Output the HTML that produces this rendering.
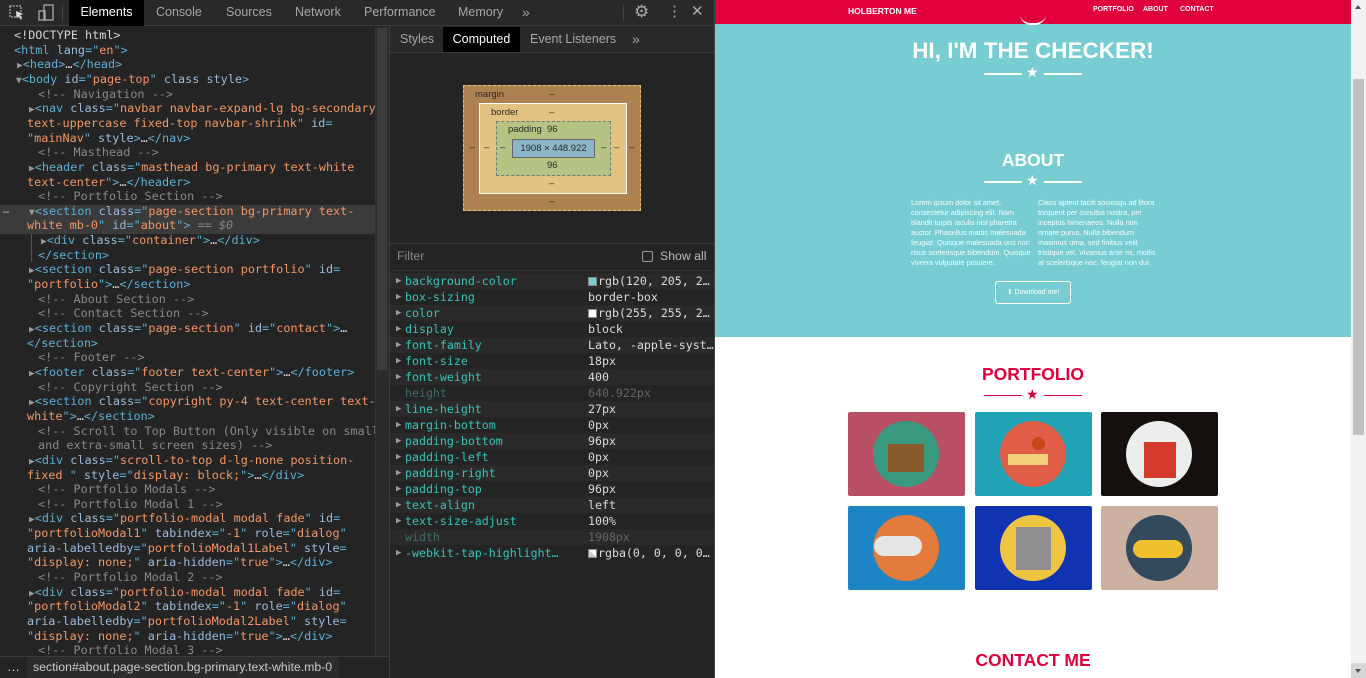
<!DOCTYPE html>
<html><head><meta charset="utf-8"><style>
*{margin:0;padding:0;box-sizing:border-box}
body{width:1366px;height:678px;overflow:hidden;background:#242424;position:relative;font-family:"Liberation Sans",sans-serif}
.abs{position:absolute}
.mono{font-family:"DejaVu Sans Mono","Liberation Mono",monospace}
#el{left:0;top:28px;width:375px;height:629px;overflow:hidden;font-size:11.8px;color:#d5d5d5}
#el .l{position:absolute;white-space:pre;height:14.65px;line-height:14.65px}
.t{color:#5db0d7}.a{color:#9bbbdc}.v{color:#f29766}.c{color:#898989}
.tri{color:#9a9a9a;font-size:9.5px}
.tab{position:absolute;top:0;height:26px;line-height:24px;font-size:12.5px;color:#a8a8a8}
.ctab{position:absolute;top:27px;height:25px;line-height:24px;font-size:12.5px;color:#a8a8a8}
.row{position:absolute;left:390px;width:324px;height:16px;line-height:16px;font-size:11.6px;white-space:pre}
.row .n{position:absolute;left:15px;color:#35c5bb}
.row .x{position:absolute;left:198px;color:#dcdcdc}
.row .ar{position:absolute;left:6px;color:#9a9a9a;font-size:9px}
.sw{display:inline-block;width:9px;height:9px;border:1px solid #888;vertical-align:-1px;margin-right:1px}
.card{position:absolute;width:117px;height:84px;border-radius:2px}
.circ{position:absolute;left:25px;top:9px;width:66px;height:66px;border-radius:50%}
.ptxt{position:absolute;font-size:7.3px;line-height:10px;color:#f4feff;width:122px}
</style></head><body>

<div class="abs" style="left:0;top:0;width:715px;height:26px;background:#292929;border-bottom:1px solid #3d3d3d"></div>
<svg class="abs" style="left:8px;top:4px" width="46" height="18" viewBox="0 0 46 18"><rect x="2" y="2" width="11" height="11" fill="none" stroke="#aaa" stroke-width="1.3" stroke-dasharray="2 1"/><path d="M8 7 L15 10 L12 11 L14 15 L12.5 15.5 L10.5 12 L8.5 14 Z" fill="#ddd"/><rect x="36" y="1" width="9" height="15" fill="none" stroke="#aaa" stroke-width="1.3"/><rect x="31" y="7" width="6" height="9" fill="none" stroke="#aaa" stroke-width="1.3"/></svg>
<div class="abs" style="left:62px;top:5px;width:1px;height:16px;background:#444"></div>
<div class="tab" style="left:69px;width:75px;background:#000;color:#fff;text-align:center">Elements</div>
<div class="tab" style="left:156px">Console</div>
<div class="tab" style="left:226px">Sources</div>
<div class="tab" style="left:295px">Network</div>
<div class="tab" style="left:364px">Performance</div>
<div class="tab" style="left:458px">Memory</div>
<div class="tab" style="left:522px;font-size:14px">»</div>
<div class="abs" style="left:623px;top:5px;width:1px;height:16px;background:#444"></div>
<div class="tab" style="left:634px;font-size:17px;color:#aaa">⚙</div>
<div class="tab" style="left:667px;font-size:15px;color:#aaa">⋮</div>
<div class="tab" style="left:691px;font-size:15px;color:#aaa">✕</div>

<div class="abs" style="left:0;top:205px;width:375px;height:29px;background:#3b3b3b"></div>
<div class="abs" style="left:31px;top:234px;width:1px;height:28px;background:#3a5a8a"></div>
<div class="abs mono" style="left:3px;top:205px;font-size:10px;color:#aaa">…</div>
<div id="el" class="abs mono">
<div class="l" style="top:0;left:14px">&lt;!DOCTYPE html&gt;</div>
<div class="l" style="top:14.65px;left:14px"><span class="t">&lt;html </span><span class="a">lang</span><span class="t">="</span><span class="v">en</span><span class="t">"&gt;</span></div>
<div class="l" style="top:29.3px;left:17px"><span class="tri">▶</span><span class="t">&lt;head&gt;</span>…<span class="t">&lt;/head&gt;</span></div>
<div class="l" style="top:43.95px;left:16px"><span class="tri">▼</span><span class="t">&lt;body </span><span class="a">id</span><span class="t">="</span><span class="v">page-top</span><span class="t">" </span><span class="a">class style</span><span class="t">&gt;</span></div>
<div class="l c" style="top:58.6px;left:38px">&lt;!-- Navigation --&gt;</div>
<div class="l" style="top:73.25px;left:29px"><span class="tri">▶</span><span class="t">&lt;nav </span><span class="a">class</span><span class="t">="</span><span class="v">navbar navbar-expand-lg bg-secondary</span></div>
<div class="l" style="top:87.9px;left:27px"><span class="v">text-uppercase fixed-top navbar-shrink</span><span class="t">" </span><span class="a">id</span><span class="t">=</span></div>
<div class="l" style="top:102.55px;left:27px"><span class="t">"</span><span class="v">mainNav</span><span class="t">" </span><span class="a">style</span><span class="t">&gt;</span>…<span class="t">&lt;/nav&gt;</span></div>
<div class="l c" style="top:117.2px;left:38px">&lt;!-- Masthead --&gt;</div>
<div class="l" style="top:131.85px;left:29px"><span class="tri">▶</span><span class="t">&lt;header </span><span class="a">class</span><span class="t">="</span><span class="v">masthead bg-primary text-white</span></div>
<div class="l" style="top:146.5px;left:27px"><span class="v">text-center</span><span class="t">"&gt;</span>…<span class="t">&lt;/header&gt;</span></div>
<div class="l c" style="top:161.15px;left:38px">&lt;!-- Portfolio Section --&gt;</div>
<div class="l" style="top:175.8px;left:29px"><span class="tri">▼</span><span class="t">&lt;section </span><span class="a">class</span><span class="t">="</span><span class="v">page-section bg-primary text-</span></div>
<div class="l" style="top:190.45px;left:27px"><span class="v">white mb-0</span><span class="t">" </span><span class="a">id</span><span class="t">="</span><span class="v">about</span><span class="t">"&gt;</span> <span class="c">== <i>$0</i></span></div>
<div class="l" style="top:205.1px;left:41px"><span class="tri">▶</span><span class="t">&lt;div </span><span class="a">class</span><span class="t">="</span><span class="v">container</span><span class="t">"&gt;</span>…<span class="t">&lt;/div&gt;</span></div>
<div class="l t" style="top:219.75px;left:38px">&lt;/section&gt;</div>
<div class="l" style="top:234.4px;left:29px"><span class="tri">▶</span><span class="t">&lt;section </span><span class="a">class</span><span class="t">="</span><span class="v">page-section portfolio</span><span class="t">" </span><span class="a">id</span><span class="t">=</span></div>
<div class="l" style="top:249.05px;left:27px"><span class="t">"</span><span class="v">portfolio</span><span class="t">"&gt;</span>…<span class="t">&lt;/section&gt;</span></div>
<div class="l c" style="top:263.7px;left:38px">&lt;!-- About Section --&gt;</div>
<div class="l c" style="top:278.35px;left:38px">&lt;!-- Contact Section --&gt;</div>
<div class="l" style="top:293px;left:29px"><span class="tri">▶</span><span class="t">&lt;section </span><span class="a">class</span><span class="t">="</span><span class="v">page-section</span><span class="t">" </span><span class="a">id</span><span class="t">="</span><span class="v">contact</span><span class="t">"&gt;</span>…</div>
<div class="l t" style="top:307.65px;left:27px">&lt;/section&gt;</div>
<div class="l c" style="top:322.3px;left:38px">&lt;!-- Footer --&gt;</div>
<div class="l" style="top:336.95px;left:29px"><span class="tri">▶</span><span class="t">&lt;footer </span><span class="a">class</span><span class="t">="</span><span class="v">footer text-center</span><span class="t">"&gt;</span>…<span class="t">&lt;/footer&gt;</span></div>
<div class="l c" style="top:351.6px;left:38px">&lt;!-- Copyright Section --&gt;</div>
<div class="l" style="top:366.25px;left:29px"><span class="tri">▶</span><span class="t">&lt;section </span><span class="a">class</span><span class="t">="</span><span class="v">copyright py-4 text-center text-</span></div>
<div class="l" style="top:380.9px;left:27px"><span class="v">white</span><span class="t">"&gt;</span>…<span class="t">&lt;/section&gt;</span></div>
<div class="l c" style="top:395.55px;left:38px">&lt;!-- Scroll to Top Button (Only visible on small</div>
<div class="l c" style="top:410.2px;left:38px">and extra-small screen sizes) --&gt;</div>
<div class="l" style="top:424.85px;left:29px"><span class="tri">▶</span><span class="t">&lt;div </span><span class="a">class</span><span class="t">="</span><span class="v">scroll-to-top d-lg-none position-</span></div>
<div class="l" style="top:439.5px;left:27px"><span class="v">fixed </span><span class="t">" </span><span class="a">style</span><span class="t">="</span><span class="v">display: block;</span><span class="t">"&gt;</span>…<span class="t">&lt;/div&gt;</span></div>
<div class="l c" style="top:454.15px;left:38px">&lt;!-- Portfolio Modals --&gt;</div>
<div class="l c" style="top:468.8px;left:38px">&lt;!-- Portfolio Modal 1 --&gt;</div>
<div class="l" style="top:483.45px;left:29px"><span class="tri">▶</span><span class="t">&lt;div </span><span class="a">class</span><span class="t">="</span><span class="v">portfolio-modal modal fade</span><span class="t">" </span><span class="a">id</span><span class="t">=</span></div>
<div class="l" style="top:498.1px;left:27px"><span class="t">"</span><span class="v">portfolioModal1</span><span class="t">" </span><span class="a">tabindex</span><span class="t">="</span><span class="v">-1</span><span class="t">" </span><span class="a">role</span><span class="t">="</span><span class="v">dialog</span><span class="t">"</span></div>
<div class="l" style="top:512.75px;left:27px"><span class="a">aria-labelledby</span><span class="t">="</span><span class="v">portfolioModal1Label</span><span class="t">" </span><span class="a">style</span><span class="t">=</span></div>
<div class="l" style="top:527.4px;left:27px"><span class="t">"</span><span class="v">display: none;</span><span class="t">" </span><span class="a">aria-hidden</span><span class="t">="</span><span class="v">true</span><span class="t">"&gt;</span>…<span class="t">&lt;/div&gt;</span></div>
<div class="l c" style="top:542.05px;left:38px">&lt;!-- Portfolio Modal 2 --&gt;</div>
<div class="l" style="top:556.7px;left:29px"><span class="tri">▶</span><span class="t">&lt;div </span><span class="a">class</span><span class="t">="</span><span class="v">portfolio-modal modal fade</span><span class="t">" </span><span class="a">id</span><span class="t">=</span></div>
<div class="l" style="top:571.35px;left:27px"><span class="t">"</span><span class="v">portfolioModal2</span><span class="t">" </span><span class="a">tabindex</span><span class="t">="</span><span class="v">-1</span><span class="t">" </span><span class="a">role</span><span class="t">="</span><span class="v">dialog</span><span class="t">"</span></div>
<div class="l" style="top:586px;left:27px"><span class="a">aria-labelledby</span><span class="t">="</span><span class="v">portfolioModal2Label</span><span class="t">" </span><span class="a">style</span><span class="t">=</span></div>
<div class="l" style="top:600.65px;left:27px"><span class="t">"</span><span class="v">display: none;</span><span class="t">" </span><span class="a">aria-hidden</span><span class="t">="</span><span class="v">true</span><span class="t">"&gt;</span>…<span class="t">&lt;/div&gt;</span></div>
<div class="l c" style="top:615.3px;left:38px">&lt;!-- Portfolio Modal 3 --&gt;</div>
</div>
<div class="abs" style="left:375px;top:27px;width:14px;height:630px;background:#2b2b2b;border-left:1px solid #333"></div>
<div class="abs" style="left:377px;top:28px;width:10px;height:342px;background:#3c3c3c"></div>
<div class="abs" style="left:0;top:656px;width:390px;height:22px;background:#242424;border-top:1px solid #3d3d3d"></div>
<div class="abs" style="left:27px;top:657px;width:311px;height:21px;background:#2c2c2c"></div>
<div class="abs" style="left:7px;top:659px;font-size:13px;color:#ddd">…</div>
<div class="abs" style="left:33px;top:660px;font-size:12.3px;color:#ccc;white-space:nowrap">section#about.page-section.bg-primary.text-white.mb-0</div>

<div class="abs" style="left:389px;top:26px;width:1px;height:652px;background:#3d3d3d"></div>

<div class="abs" style="left:390px;top:26px;width:325px;height:27px;background:#292929;border-bottom:1px solid #3d3d3d"></div>
<div class="ctab" style="left:400px">Styles</div>
<div class="ctab" style="left:443px;width:77px;background:#000;color:#fff;text-align:center">Computed</div>
<div class="ctab" style="left:530px">Event Listeners</div>
<div class="ctab" style="left:632px;font-size:14px">»</div>

<div class="abs" style="left:463px;top:85px;width:178px;height:126px;background:#ae8150;border:1px dashed #e0c080;font-size:9.5px;color:#2a2a2a">
 <div class="abs" style="left:11px;top:3px">margin</div><div class="abs" style="left:85px;top:3px">–</div>
 <div class="abs" style="left:85px;top:110px">–</div>
 <div class="abs" style="left:6px;top:56px">–</div><div class="abs" style="left:165px;top:56px">–</div>
 <div class="abs" style="left:15px;top:17px;width:148px;height:91px;background:#e2c382;border:1px solid #fff">
  <div class="abs" style="left:11px;top:3px">border</div><div class="abs" style="left:69px;top:3px">–</div>
  <div class="abs" style="left:69px;top:74px">–</div>
  <div class="abs" style="left:4px;top:38px">–</div><div class="abs" style="left:134px;top:38px">–</div>
  <div class="abs" style="left:16px;top:17px;width:115px;height:55px;background:#b5c383;border:1px dashed #777">
   <div class="abs" style="left:11px;top:2px">padding</div><div class="abs" style="left:50px;top:2px">96</div>
   <div class="abs" style="left:50px;top:38px">96</div>
   <div class="abs" style="left:3px;top:20px">–</div><div class="abs" style="left:104px;top:20px">–</div>
   <div class="abs" style="left:15px;top:17px;width:83px;height:19px;background:#8cb5c8;border:1px solid #666;text-align:center;line-height:17px">1908 × 448.922</div>
  </div>
 </div>
</div>

<div class="abs" style="left:390px;top:243px;width:325px;height:1px;background:#3d3d3d"></div>
<div class="abs" style="left:397px;top:249px;font-size:12.3px;color:#888">Filter</div>
<div class="abs" style="left:642px;top:251px;width:11px;height:11px;border:1px solid #999;border-radius:2px"></div>
<div class="abs" style="left:660px;top:249px;font-size:12.3px;color:#bbb">Show all</div>
<div class="abs" style="left:390px;top:270px;width:325px;height:1px;background:#333"></div>

<div class="mono">
<div class="row" style="top:273px;background:#2a2a2a"><span class="ar">▶</span><span class="n">background-color</span><span class="x"><span class="sw" style="background:#78cdd2"></span>rgb(120, 205, 2…</span></div>
<div class="row" style="top:289px"><span class="ar">▶</span><span class="n">box-sizing</span><span class="x">border-box</span></div>
<div class="row" style="top:305px;background:#2a2a2a"><span class="ar">▶</span><span class="n">color</span><span class="x"><span class="sw" style="background:#fff"></span>rgb(255, 255, 2…</span></div>
<div class="row" style="top:321px"><span class="ar">▶</span><span class="n">display</span><span class="x">block</span></div>
<div class="row" style="top:337px;background:#2a2a2a"><span class="ar">▶</span><span class="n">font-family</span><span class="x">Lato, -apple-syst…</span></div>
<div class="row" style="top:353px"><span class="ar">▶</span><span class="n">font-size</span><span class="x">18px</span></div>
<div class="row" style="top:369px;background:#2a2a2a"><span class="ar">▶</span><span class="n">font-weight</span><span class="x">400</span></div>
<div class="row" style="top:385px"><span class="n" style="color:#3d6e6a">height</span><span class="x" style="color:#666">640.922px</span></div>
<div class="row" style="top:401px;background:#2a2a2a"><span class="ar">▶</span><span class="n">line-height</span><span class="x">27px</span></div>
<div class="row" style="top:417px"><span class="ar">▶</span><span class="n">margin-bottom</span><span class="x">0px</span></div>
<div class="row" style="top:433px;background:#2a2a2a"><span class="ar">▶</span><span class="n">padding-bottom</span><span class="x">96px</span></div>
<div class="row" style="top:449px"><span class="ar">▶</span><span class="n">padding-left</span><span class="x">0px</span></div>
<div class="row" style="top:465px;background:#2a2a2a"><span class="ar">▶</span><span class="n">padding-right</span><span class="x">0px</span></div>
<div class="row" style="top:481px"><span class="ar">▶</span><span class="n">padding-top</span><span class="x">96px</span></div>
<div class="row" style="top:497px;background:#2a2a2a"><span class="ar">▶</span><span class="n">text-align</span><span class="x">left</span></div>
<div class="row" style="top:513px"><span class="ar">▶</span><span class="n">text-size-adjust</span><span class="x">100%</span></div>
<div class="row" style="top:529px;background:#2a2a2a"><span class="n" style="color:#3d6e6a">width</span><span class="x" style="color:#666">1908px</span></div>
<div class="row" style="top:545px"><span class="ar">▶</span><span class="n">-webkit-tap-highlight…</span><span class="x"><span class="sw" style="background:linear-gradient(45deg,#ccc 50%,#fff 50%)"></span>rgba(0, 0, 0, 0…</span></div>
</div>
<div class="abs" style="left:714px;top:0;width:1px;height:678px;background:#444"></div>

<div class="abs" style="left:715px;top:0;width:636px;height:678px;background:#fff;overflow:hidden">
 <div class="abs" style="left:0;top:24px;width:636px;height:313px;background:#78cdd2"></div>
 <div class="abs" style="left:0;top:0;width:636px;height:24px;background:#e0003b"></div>
 <div class="abs" style="left:305px;top:14px;width:26px;height:11px;border-radius:0 0 13px 13px;border-bottom:2px solid #fff"></div>
 <div class="abs" style="left:133px;top:6px;font-size:8.5px;font-weight:bold;color:#fff">HOLBERTON ME</div>
 <div class="abs" style="left:378px;top:6px;font-size:7px;font-weight:bold;color:#fff">PORTFOLIO</div>
 <div class="abs" style="left:428px;top:6px;font-size:7px;font-weight:bold;color:#fff">ABOUT</div>
 <div class="abs" style="left:465px;top:6px;font-size:7px;font-weight:bold;color:#fff">CONTACT</div>
 <div class="abs" style="left:0;top:38px;width:636px;text-align:center;font-size:22.5px;font-weight:bold;color:#fff">HI, I'M THE CHECKER!</div>
 <div class="abs" style="left:269px;top:73px;width:38px;height:2px;background:#fff"></div>
 <div class="abs" style="left:329px;top:73px;width:38px;height:2px;background:#fff"></div>
 <div class="abs" style="left:311px;top:64px;font-size:14px;color:#fff">★</div>
 <div class="abs" style="left:0;top:150px;width:636px;text-align:center;font-size:17.5px;font-weight:bold;color:#fff">ABOUT</div>
 <div class="abs" style="left:269px;top:181px;width:38px;height:2px;background:#fff"></div>
 <div class="abs" style="left:329px;top:181px;width:38px;height:2px;background:#fff"></div>
 <div class="abs" style="left:311px;top:172px;font-size:14px;color:#fff">★</div>
 <div class="ptxt" style="left:196px;top:198px">Lorem ipsum dolor sit amet, consectetur adipiscing elit. Nam blandit turpis iaculis nisl pharetra auctor. Phasellus mattis malesuada feugiat. Quisque malesuada orci non risus scelerisque bibendum. Quisque viverra vulputate posuere.</div>
 <div class="ptxt" style="left:323px;top:198px">Class aptent taciti sociosqu ad litora torquent per conubia nostra, per inceptos himenaeos. Nulla non ornare purus. Nulla bibendum maximus urna, sed finibus velit tristique vel. Vivamus ante mi, mollis at scelerisque nec, feugiat non dui.</div>
 <div class="abs" style="left:280px;top:281px;width:76px;height:23px;border:1px solid #fff;border-radius:3px;font-size:7px;color:#fff;line-height:21px;text-align:center">⬇ Download me!</div>
 <div class="abs" style="left:0;top:364px;width:636px;text-align:center;font-size:17.5px;font-weight:bold;color:#e0003b">PORTFOLIO</div>
 <div class="abs" style="left:269px;top:395px;width:38px;height:1px;background:#e0003b"></div>
 <div class="abs" style="left:329px;top:395px;width:38px;height:1px;background:#e0003b"></div>
 <div class="abs" style="left:311px;top:386px;font-size:14px;color:#e0003b">★</div>
 <div class="card" style="left:133px;top:412px;background:#b94f64"><div class="circ" style="background:#3a9a80"></div><div class="abs" style="left:40px;top:32px;width:36px;height:28px;background:#8a5a2a"></div></div>
 <div class="card" style="left:260px;top:412px;background:#21a3b5"><div class="circ" style="background:#e05d48"></div><div class="abs" style="left:33px;top:42px;width:40px;height:11px;background:#f2d078"></div><div class="abs" style="left:57px;top:25px;width:13px;height:13px;border-radius:50%;background:#c8451c"></div></div>
 <div class="card" style="left:386px;top:412px;background:#15100e"><div class="circ" style="background:#eceeee"></div><div class="abs" style="left:43px;top:30px;width:32px;height:36px;background:#d33a2c"></div></div>
 <div class="card" style="left:133px;top:506px;background:#1d85c3"><div class="circ" style="background:#e27b3b"></div><div class="abs" style="left:26px;top:30px;width:48px;height:20px;border-radius:10px;background:#e6e6e6"></div></div>
 <div class="card" style="left:260px;top:506px;background:#1033b3"><div class="circ" style="background:#f0c443"></div><div class="abs" style="left:41px;top:21px;width:35px;height:43px;background:#8f8f8f"></div></div>
 <div class="card" style="left:386px;top:506px;background:#ccb0a2"><div class="circ" style="background:#334a5c"></div><div class="abs" style="left:32px;top:34px;width:50px;height:18px;border-radius:9px;background:#f0c02e"></div></div>
 <div class="abs" style="left:0;top:650px;width:636px;text-align:center;font-size:17.5px;font-weight:bold;color:#e0003b">CONTACT ME</div>
</div>
<div class="abs" style="left:1351px;top:0;width:15px;height:678px;background:#f1f1f1"></div>
<div class="abs" style="left:1353px;top:79px;width:11px;height:356px;background:#c1c1c1"></div>
<div class="abs" style="left:1355px;top:5px;width:0;height:0;border-left:3.5px solid transparent;border-right:3.5px solid transparent;border-bottom:4px solid #505050"></div>
<div class="abs" style="left:1351px;top:663px;width:15px;height:15px;background:#d6d6d6"></div>
<div class="abs" style="left:1355px;top:669px;width:0;height:0;border-left:3.5px solid transparent;border-right:3.5px solid transparent;border-top:4px solid #505050"></div>
</body></html>
